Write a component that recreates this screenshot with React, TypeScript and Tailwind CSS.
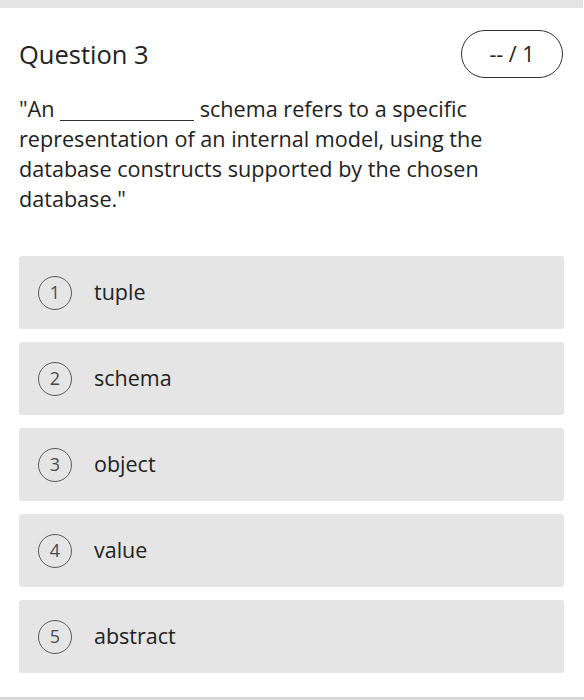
import React from "react";

const options = ["tuple", "schema", "object", "value", "abstract"];

export default function App() {
    return (
        <div className="w-[584px] h-[700px] bg-white flex flex-col text-[#222]" style={{ fontFamily: '"Open Sans", "Liberation Sans", sans-serif' }}>
            <div className="h-[8px] w-[583px] bg-[#e4e4e4]" />

            <div className="flex-1 pl-[19px] pr-[20px] pt-[22px]">
                {/* Header */}
                <div className="flex items-center justify-between h-[48px]">
                    <h1 className="text-[25.5px] leading-none pt-[2px]">Question 3</h1>
                    <div className="w-[102px] h-[48px] rounded-full border-[1.5px] border-[#333] flex items-center justify-center text-[21.5px] mr-[1px]">
                        -- / 1
                    </div>
                </div>

                {/* Question text */}
                <p className="mt-[16px] text-[21.6px] leading-[30px] w-[500px]">
                    "An{" "}
                    <span className="inline-block w-[134px] border-b border-[#333] align-[-4px]" />{" "}
                    schema refers to a specific representation of an internal model, using the database constructs supported by the chosen database."
                </p>

                {/* Options */}
                <div className="mt-[42px] flex flex-col gap-[13px]">
                    {options.map((opt, i) => (
                        <div key={opt} className="h-[73px] rounded-[3px] bg-[#e5e5e5] flex items-center pl-[19px]">
                            <div className="w-[34px] h-[34px] rounded-full border-[1.5px] border-[#5a5a5a] flex items-center justify-center text-[18px] text-[#4a4a4a]">
                                {i + 1}
                            </div>
                            <span className="ml-[22px] text-[21.5px]">{opt}</span>
                        </div>
                    ))}
                </div>
            </div>

            <div className="h-[3px] bg-[#d8d8d8]" />
        </div>
    );
}
